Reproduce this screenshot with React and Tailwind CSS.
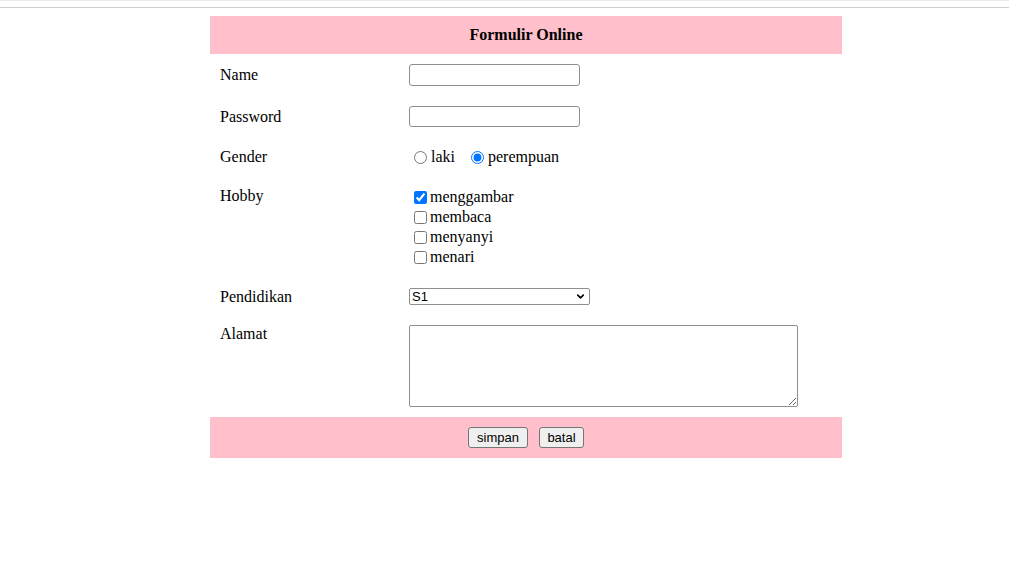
import { ChevronDown } from 'lucide-react';

const HOBBIES = [
  { label: 'menggambar', checked: true },
  { label: 'membaca', checked: false },
  { label: 'menyanyi', checked: false },
  { label: 'menari', checked: false },
];

export default function App() {
  return (
    <div className="min-h-[563px] w-full bg-white text-black font-['Liberation_Serif',serif] text-[16px]">
      {/* top edge */}
      <div className="h-[8px] border-t border-b border-t-[#ececec] border-b-[#cfcfcf] bg-white" />

      <div className="ml-[210px] mt-[8px] w-[632px]">
        {/* header */}
        <div className="flex h-[38px] items-center justify-center bg-[#ffc0cb] font-bold">
          Formulir Online
        </div>

        {/* Name */}
        <div className="grid h-[42px] grid-cols-[199px_1fr] items-center">
          <span className="pl-[10px]">Name</span>
          <input type="text" className="block h-[22px] w-[171px] rounded-[3px] border border-[#8f8f8f] bg-white" />
        </div>

        {/* Password */}
        <div className="grid h-[41px] grid-cols-[199px_1fr] items-center">
          <span className="pl-[10px]">Password</span>
          <input type="password" className="block h-[21px] w-[171px] rounded-[3px] border border-[#8f8f8f] bg-white" />
        </div>

        {/* Gender */}
        <div className="grid h-[40px] grid-cols-[199px_1fr] items-center">
          <span className="pl-[10px]">Gender</span>
          <div className="flex items-center pl-[5px]">
            <label className="flex items-center">
              <input type="radio" name="g" className="h-[13px] w-[13px] accent-[#0075ff]" />
              <span className="ml-[4px]">laki</span>
            </label>
            <label className="ml-[16px] flex items-center">
              <input type="radio" name="g" defaultChecked className="h-[13px] w-[13px] accent-[#0075ff]" />
              <span className="ml-[4px]">perempuan</span>
            </label>
          </div>
        </div>

        {/* Hobby */}
        <div className="grid grid-cols-[199px_1fr] pt-[10px] pb-[10px]">
          <span className="pl-[10px] leading-[18px]">Hobby</span>
          <div className="flex flex-col pl-[5px]">
            {HOBBIES.map((h) => (
              <label key={h.label} className="flex h-[20px] items-center">
                <input type="checkbox" defaultChecked={h.checked} className="h-[13px] w-[13px] accent-[#0075ff]" />
                <span className="ml-[3px]">{h.label}</span>
              </label>
            ))}
          </div>
        </div>

        {/* Pendidikan */}
        <div className="grid h-[39px] grid-cols-[199px_1fr] items-center">
          <span className="pl-[10px]">Pendidikan</span>
          <div className="relative h-[17px] w-[181px]">
            <select className="block h-full w-full appearance-none rounded-[2px] border border-[#8f8f8f] bg-white pl-[2px] font-['Liberation_Sans',sans-serif] text-[13px] leading-[15px]">
              <option>S1</option>
              <option>S2</option>
              <option>S3</option>
            </select>
            <ChevronDown className="pointer-events-none absolute right-[4px] top-[3px] h-[11px] w-[11px]" strokeWidth={3.5} />
          </div>
        </div>

        {/* Alamat */}
        <div className="grid grid-cols-[199px_1fr] pt-[9px] pb-[10px]">
          <span className="pl-[10px] leading-[18px]">Alamat</span>
          <textarea className="block h-[82px] w-[389px] rounded-[2px] border border-[#8f8f8f] bg-white" />
        </div>

        {/* footer */}
        <div className="flex h-[41px] items-center justify-center gap-[11px] bg-[#ffc0cb] font-['Liberation_Sans',sans-serif] text-[13px]">
          <button className="h-[21px] w-[60px] rounded-[3px] border border-[#767676] bg-[#efefef]">simpan</button>
          <button className="h-[21px] w-[45px] rounded-[3px] border border-[#767676] bg-[#efefef]">batal</button>
        </div>
      </div>
    </div>
  );
}
